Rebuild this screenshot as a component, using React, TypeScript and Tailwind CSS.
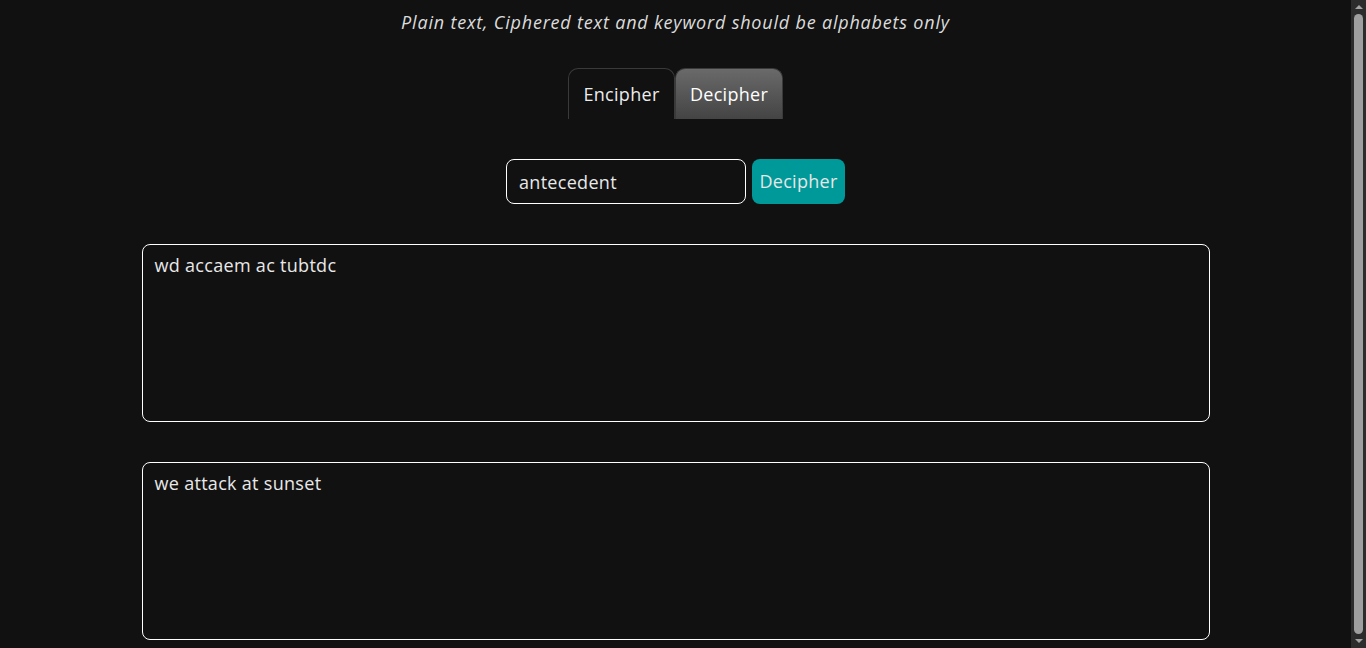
import { useState } from 'react';

const font = { fontFamily: '"Open Sans", "Noto Sans", sans-serif' };

export default function App() {
  const [mode, setMode] = useState<'encipher' | 'decipher'>('decipher');
  const [keyword, setKeyword] = useState('antecedent');
  const [input, setInput] = useState('wd accaem ac tubtdc');
  const [output, setOutput] = useState('we attack at sunset');

  return (
    <div className="flex h-screen overflow-hidden bg-[#111111] text-[#e8e8e8]" style={font}>
      <div className="flex flex-1 flex-col items-center">
        <p className="mt-[9px] text-[18px] leading-[27px] italic tracking-[0.8px] text-[#dcdcdc]">
          Plain text, Ciphered text and keyword should be alphabets only
        </p>

        {/* Tabs */}
        <div className="mt-[32px] flex items-end">
          <button
            onClick={() => setMode('encipher')}
            className={`h-[51px] w-[107px] rounded-t-[10px] border border-b-0 border-[#3a3a3a] text-[18px] tracking-[0.3px] ${
              mode === 'encipher' ? 'bg-gradient-to-b from-[#6a6a6a] to-[#444444] text-white' : 'bg-[#111111] text-[#ececec]'
            }`}
          >
            Encipher
          </button>
          <button
            onClick={() => setMode('decipher')}
            className={`h-[51px] w-[108px] rounded-t-[10px] border border-b-0 border-[#3a3a3a] text-[18px] tracking-[0.3px] ${
              mode === 'decipher' ? 'bg-gradient-to-b from-[#6a6a6a] to-[#444444] text-white' : 'bg-[#111111] text-[#ececec]'
            }`}
          >
            Decipher
          </button>
        </div>

        {/* Keyword + action */}
        <div className="mt-10 flex gap-[6px]">
          <input
            value={keyword}
            onChange={(e) => setKeyword(e.target.value)}
            className="h-[45px] w-[240px] rounded-lg border border-white bg-[#111111] px-3 text-[18px] tracking-[0.3px] text-[#e8e8e8] outline-none"
            style={font}
          />
          <button className="h-[45px] w-[93px] rounded-lg bg-[#009999] text-[18px] tracking-[0.3px] text-[#e6e6e6]">
            {mode === 'decipher' ? 'Decipher' : 'Encipher'}
          </button>
        </div>

        <textarea
          value={input}
          onChange={(e) => setInput(e.target.value)}
          className="mt-10 h-[178px] w-[1068px] shrink-0 resize-none rounded-lg border border-white bg-[#111111] px-3 pt-[7px] text-[18px] leading-[27px] tracking-[0.3px] text-[#e8e8e8] outline-none"
          style={font}
        />
        <textarea
          value={output}
          onChange={(e) => setOutput(e.target.value)}
          className="mt-10 h-[178px] w-[1068px] shrink-0 resize-none rounded-lg border border-white bg-[#111111] px-3 pt-[7px] text-[18px] leading-[27px] tracking-[0.3px] text-[#e8e8e8] outline-none"
          style={font}
        />
      </div>

      {/* Scrollbar */}
      <div className="flex w-[15px] shrink-0 flex-col items-center bg-[#2c2c2c]">
        <div className="flex h-[14px] w-full items-center justify-center">
          <div className="h-0 w-0 border-x-[4px] border-b-[4px] border-x-transparent border-b-[#a3a3a3]" />
        </div>
        <div className="w-[9px] flex-1 rounded-full bg-[#9f9f9f]" />
        <div className="flex h-[14px] w-full items-center justify-center">
          <div className="h-0 w-0 border-x-[4px] border-t-[4px] border-x-transparent border-t-[#a3a3a3]" />
        </div>
      </div>
    </div>
  );
}
